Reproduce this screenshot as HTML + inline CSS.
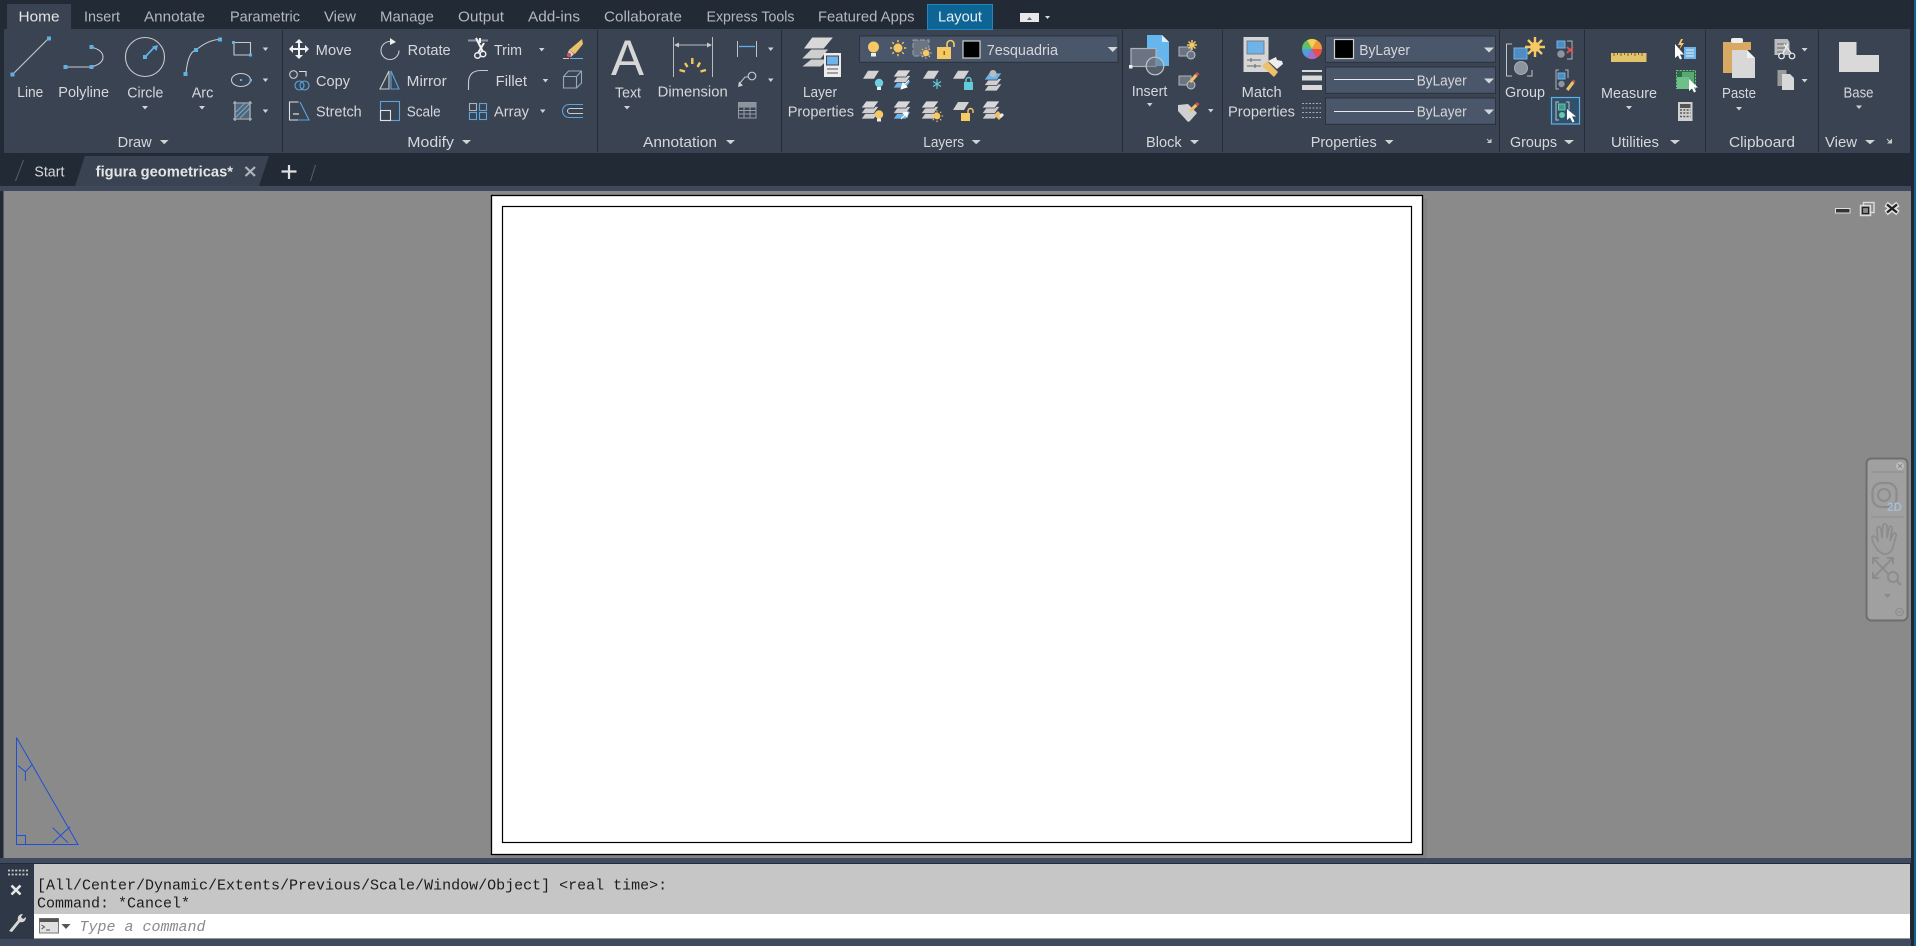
<!DOCTYPE html>
<html><head><meta charset="utf-8"><title>figura geometricas</title>
<style>
html,body{margin:0;padding:0;background:#222a36;overflow:hidden}
svg{display:block}
text{font-family:"Liberation Sans",sans-serif;font-size:14.5px;fill:#d6d8da}
.tab{fill:#b4b8be}
.m{font-family:"Liberation Mono",monospace;font-size:15px;fill:#1c1c1c}
</style></head><body>
<svg width="1916" height="946" viewBox="0 0 1916 946" xmlns="http://www.w3.org/2000/svg">
<defs>
<g id="para"><path d="M5 0h11l-5 8H0z" fill="#d2d2d2"/></g>
<g id="stk" stroke="#3a4352" stroke-width=".8"><path d="M5 11h13l-5 7H0z" fill="#cfcfcf"/><path d="M5 5.500h13l-5 7H0z" fill="#cfcfcf"/><path d="M5 0h13l-5 7H0z" fill="#d8d8d8"/></g>
<g id="stkb" stroke="#3a4352" stroke-width=".8"><path d="M5 11h13l-5 7H0z" fill="#6fb4e8"/><path d="M5 5.500h13l-5 7H0z" fill="#cfcfcf"/><path d="M5 0h13l-5 7H0z" fill="#d8d8d8"/></g>
<g id="stkm" stroke="#3a4352" stroke-width=".8"><path d="M5 11h13l-5 7H0z" fill="#cfcfcf"/><path d="M5 5.500h13l-5 7H0z" fill="#cfcfcf"/><path d="M5 0h13l-5 7H0z" fill="#6fb4e8"/></g>
<g id="sun"><circle r="4.500" fill="#f6c964"/><path d="M0-8v2.200M0 6v2.200M-8 0h2.200M6 0h2.200M-5.700-5.700l1.500 1.500M4.200 4.200l1.500 1.500M-5.700 5.700l1.500-1.500M4.200-4.200l1.500-1.500" stroke="#f6c964" stroke-width="1.400"/></g>
</defs>

<rect width="1916" height="946" fill="#222a36"/>
<!-- ribbon -->
<rect x="4" y="29" width="1906" height="124" fill="#3a4352"/>
<rect x="7" y="4" width="64" height="25" fill="#3a4352"/>
<rect x="927.500" y="4.500" width="65" height="25" fill="#0c6594" stroke="#2787bd"/>
<path d="M282.500 30v122M597.500 30v122M781.500 30v122M1122.500 30v122M1222.500 30v122M1499.500 30v122M1584.500 30v122M1705.500 30v122M1818.500 30v122" stroke="#252c38"/>

<!-- tabs text -->
<text x="18.500" y="21.500" textLength="41" lengthAdjust="spacingAndGlyphs" style="fill:#e6e6e6">Home</text>
<text class="tab" x="84" y="21.500" textLength="36" lengthAdjust="spacingAndGlyphs">Insert</text>
<text class="tab" x="144" y="21.500" textLength="61" lengthAdjust="spacingAndGlyphs">Annotate</text>
<text class="tab" x="230" y="21.500" textLength="70" lengthAdjust="spacingAndGlyphs">Parametric</text>
<text class="tab" x="324" y="21.500" textLength="32" lengthAdjust="spacingAndGlyphs">View</text>
<text class="tab" x="380" y="21.500" textLength="54" lengthAdjust="spacingAndGlyphs">Manage</text>
<text class="tab" x="458" y="21.500" textLength="46" lengthAdjust="spacingAndGlyphs">Output</text>
<text class="tab" x="528" y="21.500" textLength="52" lengthAdjust="spacingAndGlyphs">Add-ins</text>
<text class="tab" x="604" y="21.500" textLength="78" lengthAdjust="spacingAndGlyphs">Collaborate</text>
<text class="tab" x="706.500" y="21.500" textLength="88" lengthAdjust="spacingAndGlyphs">Express Tools</text>
<text class="tab" x="818" y="21.500" textLength="96.500" lengthAdjust="spacingAndGlyphs">Featured Apps</text>
<text x="938" y="21.500" textLength="44" lengthAdjust="spacingAndGlyphs" style="fill:#e8eef2">Layout</text>
<rect x="1020" y="13" width="19" height="9" fill="#e8e8e8"/><path d="M1027 20h5l-2.500-3z" fill="#666"/><path d="M1045 16h5l-2.500 3z" fill="#ddd"/>

<!-- DRAW -->
<g fill="none" stroke="#c8cacc" stroke-width="1.100">
<path d="M13 74L48 39"/>
<path d="M66 67H90M91 47Q103 50 103 57T91 67"/>
<circle cx="145" cy="57" r="19.500"/>
<path d="M186 73Q188 52 196 50Q208 40 219 39.500"/>
<path d="M234 42.500h16.500v12.500h-16.500z"/>
<ellipse cx="241" cy="80" rx="9.500" ry="6.500"/>
<path d="M233 103h19M233 119h19M235 101v20M250 101v20"/>
</g>
<g fill="#5fb0e6">
<rect x="10.500" y="72.500" width="4" height="4"/><rect x="47" y="36.500" width="4" height="4"/>
<rect x="63.500" y="65" width="4" height="4"/><rect x="89.500" y="65" width="4" height="4"/><rect x="89.500" y="45" width="4" height="4"/>
<rect x="143" y="55" width="4" height="4"/>
<rect x="183.500" y="72" width="4" height="4"/><rect x="194" y="48" width="4" height="4"/><rect x="218" y="37.500" width="4" height="4"/>
<rect x="232" y="41" width="3" height="3"/><rect x="249" y="53.500" width="3" height="3"/>
<rect x="240" y="79" width="2" height="2"/><rect x="249.500" y="79" width="2.500" height="2.500"/>
</g>
<path d="M146 56L155 46.500" stroke="#5fb0e6" stroke-width="1.800"/><path d="M158 45l-6 1.500 4.500 4.500z" fill="#5fb0e6"/>
<path d="M236 117l13-13M236 112l9-9M240 118l10-10" stroke="#7fa8c8" stroke-width="1"/><rect x="235" y="104" width="15" height="14" fill="#7fa8c8" opacity=".35"/>

<text x="17.300" y="97" textLength="26" lengthAdjust="spacingAndGlyphs">Line</text>
<text x="58.300" y="97" textLength="50.700" lengthAdjust="spacingAndGlyphs">Polyline</text>
<text x="127.300" y="97.500" textLength="36" lengthAdjust="spacingAndGlyphs">Circle</text>
<text x="191.700" y="97.500" textLength="21.600" lengthAdjust="spacingAndGlyphs">Arc</text>
<text x="117.700" y="147" textLength="34" lengthAdjust="spacingAndGlyphs">Draw</text>
<text x="407.300" y="147" textLength="46.700" lengthAdjust="spacingAndGlyphs">Modify</text>
<text x="643" y="147" textLength="74" lengthAdjust="spacingAndGlyphs">Annotation</text>
<text x="923.300" y="147" textLength="40.700" lengthAdjust="spacingAndGlyphs">Layers</text>
<text x="1146" y="147" textLength="35.700" lengthAdjust="spacingAndGlyphs">Block</text>
<text x="1310.700" y="147" textLength="66" lengthAdjust="spacingAndGlyphs">Properties</text>
<text x="1510" y="147" textLength="47" lengthAdjust="spacingAndGlyphs">Groups</text>
<text x="1611" y="147" textLength="48" lengthAdjust="spacingAndGlyphs">Utilities</text>
<text x="1729" y="147" textLength="66" lengthAdjust="spacingAndGlyphs">Clipboard</text>
<text x="1825" y="147" textLength="32" lengthAdjust="spacingAndGlyphs">View</text>

<!-- carets -->
<path fill="#d0d2d4" d="M160 140h8.500l-4.250 4.300zM462 140h9l-4.500 4.300zM726 140h9l-4.500 4.300zM971.700 140h9l-4.500 4.300zM1190 140h9l-4.500 4.300zM1385 140h8.500l-4.250 4.300zM1564 140h10l-5 4.300zM1670 140h10l-5 4.300zM1865 140h10l-5 4.300z"/>
<path fill="#d0d2d4" d="M142 106h6l-3 3.500zM199 106h6l-3 3.500zM262.700 47.500h5.500l-2.750 3.500zM262.700 78.500h5.500l-2.750 3.500zM262.700 109.500h5.500l-2.750 3.500zM539 48h5.500l-2.750 3.500zM542.700 79h5.500l-2.750 3.500zM540 109.500h5.500l-2.750 3.500zM624 106h6l-3 3.500zM768 47.500h5.500l-2.750 3.500zM768 78.500h5.500l-2.750 3.500zM1147 103h5.500l-2.750 3.500zM1208 109h5.500l-2.750 3.500zM1626 106h6l-3 3.500zM1736 107h6l-3 3.500zM1801.600 48h6l-3 3.500zM1801.600 79h6l-3 3.500zM1856 105.500h6l-3 3.500z"/>
<path d="M1491.500 138.500v4.500h-4.500zM1892 138.500v5h-5z" fill="#c8c8c8"/>
<path d="M1487 139l3.500 3.500M1887 139l3.500 3.500" stroke="#c8c8c8"/>

<!-- MODIFY -->
<path d="M299 39l4 4h-3v5h5v-3l4 4-4 4v-3h-5v5h3l-4 4-4-4h3v-5h-5v3l-4-4 4-4v3h5v-5h-3z" fill="#f0f0f0"/>
<path d="M390 41.500A9 9 0 1 0 399 50.500" fill="none" stroke="#c8cacc" stroke-width="1.100"/><path d="M390 38l6 4-6 3z" fill="#eee"/>
<path d="M468 40.500h20" stroke="#8d97a4" stroke-width="2"/>
<path d="M476 38l7 14M480 38v5M484 43l-6 10" stroke="#f4f4f4" stroke-width="2" fill="none"/>
<circle cx="477.500" cy="55.500" r="2.800" fill="none" stroke="#eee" stroke-width="1.500"/><circle cx="483" cy="54" r="2.800" fill="none" stroke="#eee" stroke-width="1.500"/>
<path d="M582 39l1 5-8 10-6-4z" fill="#edc06a"/><path d="M569 50l5 4-3 3-4-2z" fill="#d9d9d9"/><circle cx="569" cy="55" r="2.200" fill="#d8504c"/>
<path d="M563 58.500h6" stroke="#ccc"/><path d="M570 58.500h13" stroke="#5fb0e6"/>
<g fill="none" stroke-width="1.100">
<circle cx="293.500" cy="74.500" r="3.800" stroke="#c8cacc"/><path d="M299 71.500h7v5" stroke="#e0e0e0"/>
<circle cx="299.500" cy="85.500" r="4.500" stroke="#5aa5dc"/><circle cx="304.500" cy="85.500" r="4.500" stroke="#5aa5dc"/>
<path d="M389 71L380 89H389z" stroke="#c8cacc"/><path d="M391 71L399 89H391z" stroke="#5aa5dc"/>
<path d="M298.500 102H289.500V120H298.500" stroke="#e0e0e0"/><path d="M300 102L309 120H298" stroke="#5aa5dc"/><path d="M293 114h6" stroke="#eee"/>
<rect x="380.500" y="101.500" width="19" height="19" stroke="#5aa5dc"/><rect x="380.500" y="110.500" width="10" height="10" stroke="#e0e0e0"/>
<path d="M468.500 90V83Q468.500 70.500 481 70.500H488" stroke="#c8cacc"/>
<rect x="469.500" y="103.500" width="7" height="7" stroke="#a8b4c0"/><rect x="479.500" y="103.500" width="7" height="7" stroke="#5aa5dc"/><rect x="469.500" y="112.500" width="7" height="7" stroke="#5aa5dc"/><rect x="479.500" y="112.500" width="7" height="7" stroke="#5aa5dc"/>
<path d="M563.500 76.500h13v11.500h-13zM563.500 76.500l5-5.500h13v12l-5 5M576.500 76.500l5-5.500" stroke="#93a9bd"/>
<path d="M583 104.500h-14a6.500 6.500 0 0 0 0 13h14" stroke="#5aa5dc"/><path d="M583 108.500h-13a2.500 2.500 0 0 0 0 5h13" stroke="#c8cacc"/>
</g>
<text x="315.700" y="55" textLength="36" lengthAdjust="spacingAndGlyphs">Move</text>
<text x="407.700" y="55" textLength="43" lengthAdjust="spacingAndGlyphs">Rotate</text>
<text x="494" y="55" textLength="28" lengthAdjust="spacingAndGlyphs">Trim</text>
<text x="316" y="86" textLength="34" lengthAdjust="spacingAndGlyphs">Copy</text>
<text x="406.700" y="86" textLength="40" lengthAdjust="spacingAndGlyphs">Mirror</text>
<text x="495.700" y="86" textLength="31.300" lengthAdjust="spacingAndGlyphs">Fillet</text>
<text x="316" y="116.700" textLength="45.700" lengthAdjust="spacingAndGlyphs">Stretch</text>
<text x="406.700" y="116.700" textLength="34" lengthAdjust="spacingAndGlyphs">Scale</text>
<text x="494" y="116.700" textLength="35" lengthAdjust="spacingAndGlyphs">Array</text>

<!-- ANNOTATION -->
<text x="611" y="75" style="font-size:50px;fill:#d6d6d6" textLength="33" lengthAdjust="spacingAndGlyphs">A</text>
<text x="615" y="97.500" textLength="26" lengthAdjust="spacingAndGlyphs">Text</text>
<text x="657.700" y="96.700" textLength="70" lengthAdjust="spacingAndGlyphs">Dimension</text>
<path d="M673.500 37v40M712.500 37v40M675 45h36" stroke="#b8bcc0" fill="none"/><path d="M674 45l5-2.500v5zM712 45l-5-2.500v5z" fill="#c8c8c8"/>
<path d="M692.300 58v6M685 63l2.500 4M700 62.500l-2.500 4.500M679.500 70l5.500 1.500M706 70l-5.500 1.500" stroke="#f2c661" stroke-width="2.400" fill="none"/>
<path d="M737.500 41v16M756.500 41v16" stroke="#c0c4c8"/><path d="M739 46.500h16" stroke="#5fb0e6" stroke-width="1.300"/>
<circle cx="752" cy="76" r="3.800" fill="none" stroke="#c0c4c8" stroke-width="1.200"/><path d="M748 77h-3l-5 6" fill="none" stroke="#c0c4c8"/><path d="M738 87l1-5.500 4 4z" fill="#d0d0d0"/>
<path d="M738.500 102.500h17.500v15.500h-17.500zM738.500 107h17.500M738.500 110.500h17.500M738.500 114h17.500M744 107v11M750 107v11" fill="none" stroke="#949ca6"/><path d="M738.500 102.500h17.500v4.500h-17.500z" fill="#8b939d"/>

<!-- LAYERS -->
<g stroke="#3a4352" stroke-width="1"><path d="M811 59h18l-8 8h-20z" fill="#cfcfcf"/><path d="M811 49h18l-8 10h-20z" fill="#cfcfcf"/><path d="M812 37h22l-10 12h-21z" fill="#d8d8d8"/></g>
<rect x="824" y="53" width="17" height="24" fill="#ececec"/><rect x="826.500" y="56" width="12" height="9" fill="#6fb4e8" stroke="#445"/><path d="M827 69h11M827 73h11" stroke="#555"/>
<text x="803" y="97" textLength="34" lengthAdjust="spacingAndGlyphs">Layer</text>
<text x="787.700" y="116.700" textLength="66.300" lengthAdjust="spacingAndGlyphs">Properties</text>

<rect x="859.500" y="36" width="258.500" height="26.300" fill="#4a566a" stroke="#2a3240"/>
<circle cx="873.500" cy="47" r="5.500" fill="#f6c964"/><path d="M871 53h5v3.500h-5z" fill="#eee"/>
<use href="#sun" x="898" y="48"/>
<path d="M913 40h16v16h-16z" fill="#6b7482" stroke="#9aa2ac" stroke-dasharray="5 2"/><use href="#sun" transform="translate(926 53) scale(.7)"/>
<rect x="937" y="47" width="14" height="12" fill="#f6c964"/><path d="M947 47v-3a3.500 3.500 0 0 1 7 0v3" fill="none" stroke="#f6c964" stroke-width="1.600"/><rect x="943.500" y="51" width="1.500" height="4" fill="#8a6a20"/>
<rect x="963" y="41" width="17" height="17" fill="#000" stroke="#d0d0d0" stroke-width="1.200"/>
<text x="986.700" y="55" textLength="71.300" lengthAdjust="spacingAndGlyphs">7esquadria</text>

<!-- row2 -->
<use href="#para" x="863" y="70.700"/><circle cx="879" cy="83" r="4.200" fill="#6fd0dc"/><rect x="877" y="87" width="4" height="3" fill="#eee"/>
<use href="#stkb" x="893" y="70"/><path d="M901 89l2-6 4 4zM904 85l5-5" fill="#fff" stroke="#fff"/>
<use href="#para" x="923" y="70.700"/><path d="M937 79v10M933 81.500l8 5M941 81.500l-8 5" stroke="#63cad8" stroke-width="1.200"/>
<use href="#para" x="953" y="70.700"/><rect x="964" y="82" width="9" height="8" fill="#63cad8"/><path d="M966 82v-2a2.500 2.500 0 0 1 5 0v2" fill="none" stroke="#63cad8" stroke-width="1.400"/>
<use href="#stkm" x="984" y="73"/><circle cx="993" cy="73.500" r="3.500" fill="#b8bcc0"/>
<!-- row3 -->
<use href="#stk" x="861" y="101"/><circle cx="879" cy="114.500" r="4.200" fill="#f6c964"/><rect x="877" y="118.500" width="4" height="3" fill="#eee"/>
<use href="#stkb" x="893" y="101"/><path d="M901 119l5-5M908 112l-5 1 4 4z" fill="#fff" stroke="#fff"/>
<use href="#stk" x="921" y="101"/><use href="#sun" transform="translate(937 116) scale(.75)"/>
<use href="#para" x="953" y="102"/><rect x="961" y="113" width="9" height="8" fill="#f6c964"/><path d="M968 113v-2a2.500 2.500 0 0 1 5 0v2" fill="none" stroke="#f6c964" stroke-width="1.400"/>
<use href="#stk" x="982" y="101"/><path d="M994 115l4-4 5 5-4 4z" fill="#edc06a"/><path d="M999 116l3-3 2 2-3 3z" fill="#eee"/>

<!-- BLOCK -->
<path d="M1147 35h15l7 7v24h-22z" fill="#66b6ee"/><path d="M1162 35l7 7h-7z" fill="#d8eefa"/>
<rect x="1131" y="48.500" width="25" height="18" fill="#6a7482" stroke="#b0b4ba" stroke-width="1.200"/>
<circle cx="1155" cy="66" r="8.800" fill="#6a7482" fill-opacity=".55" stroke="#c0c4c8" stroke-width="1.200"/><rect x="1129" y="65" width="3.500" height="3.500" fill="#eee"/>
<text x="1131.700" y="96" textLength="35.600" lengthAdjust="spacingAndGlyphs">Insert</text>
<rect x="1179" y="47" width="12" height="9" fill="#6a7482" stroke="#b0b4ba"/><circle cx="1191" cy="55" r="4" fill="#6a7482" stroke="#c0c4c8"/><path d="M1192 40v10M1187 45h10M1188.500 41.500l7 7M1195.500 41.500l-7 7" stroke="#f6c964" stroke-width="1.500"/>
<rect x="1179" y="76" width="12" height="9" fill="#6a7482" stroke="#b0b4ba"/><circle cx="1191" cy="85" r="4" fill="#6a7482" stroke="#c0c4c8"/><path d="M1189 81l6-7 2.500 2-6 7z" fill="#edc06a"/><path d="M1195 74l2-2 2.500 2-2 2z" fill="#d8504c"/>
<path d="M1178 105l10-1 9 9-7 8-2 1-10-11z" fill="#d0d0d0"/><path d="M1189 110l6-6 2.500 2-6 6z" fill="#edc06a"/><path d="M1195 104l2-2 2.500 2-2 2z" fill="#d8504c"/>

<!-- PROPERTIES -->
<rect x="1243.500" y="37" width="25" height="35" fill="#d6d6d6"/><rect x="1247" y="41" width="17" height="13" fill="#6fb4e8" stroke="#7a8088"/><path d="M1247 60h14M1247 66h14M1251 58v4M1255 64v4" stroke="#666"/>
<path d="M1262 66l5-5 11 11-4 5z" fill="#edc06a"/><path d="M1268 61l8-4 1 3 5 1 1 3-6 5z" fill="#eee"/>
<text x="1241.700" y="97" textLength="40" lengthAdjust="spacingAndGlyphs">Match</text>
<text x="1228" y="116.700" textLength="67" lengthAdjust="spacingAndGlyphs">Properties</text>
<path d="M1312 49L1322 49A10 10 0 0 1 1317 57.700z" fill="#e6524b"/><path d="M1312 49L1317 57.700A10 10 0 0 1 1307 57.700z" fill="#a86cc6"/><path d="M1312 49L1307 57.700A10 10 0 0 1 1302 49z" fill="#4f9fe0"/><path d="M1312 49L1302 49A10 10 0 0 1 1307 40.300z" fill="#5fbf6a"/><path d="M1312 49L1307 40.300A10 10 0 0 1 1317 40.300z" fill="#f3d14e"/><path d="M1312 49L1317 40.300A10 10 0 0 1 1322 49z" fill="#f19a3d"/>
<path d="M1302 70h20v2h-20zM1302 75.500h20v5h-20zM1302 85h20v5h-20z" fill="#d8d8d8"/>
<path d="M1302 103.500h19M1302 108h19M1302 112.500h19M1302 117.500h19" stroke="#a8acb0" stroke-dasharray="2 1.500"/>
<g fill="#4a566a" stroke="#2a3240"><rect x="1325.500" y="36" width="170" height="26.300"/><rect x="1325.500" y="67" width="170" height="26.300"/><rect x="1325.500" y="98" width="170" height="26.300"/></g>
<rect x="1334.500" y="39.500" width="19" height="19" fill="#000" stroke="#d0d0d0" stroke-width="1.200"/>
<text x="1359.300" y="55" textLength="50.700" lengthAdjust="spacingAndGlyphs">ByLayer</text>
<path d="M1334 79.500h80M1334 111.500h80" stroke="#eaeaea"/>
<text x="1416.700" y="85.700" textLength="50" lengthAdjust="spacingAndGlyphs">ByLayer</text>
<text x="1416.700" y="116.700" textLength="50" lengthAdjust="spacingAndGlyphs">ByLayer</text>
<!-- combo carets -->
<path fill="#d4d6d8" d="M1107.700 47h10l-5 5zM1484 47.500h10l-5 5zM1484 78.500h10l-5 5zM1484 109.500h10l-5 5z"/>

<!-- GROUPS -->
<path d="M1512 44h-5.500v32h5.500M1527 76h5v-6" fill="none" stroke="#c0c4c8"/>
<rect x="1514" y="48" width="13" height="11" fill="#4f8cc0" stroke="#6fb4e8"/><circle cx="1521" cy="68" r="6.500" fill="#8c949e" stroke="#aab"/>
<path d="M1535 37v20M1525 47h20M1528 40l14 14M1542 40l-14 14" stroke="#f6c964" stroke-width="2.400"/><circle cx="1535" cy="47" r="5" fill="#f6c964"/>
<text x="1505" y="97" textLength="40" lengthAdjust="spacingAndGlyphs">Group</text>
<path d="M1567 41h5v18h-5" fill="none" stroke="#b0b4ba"/><rect x="1557" y="41" width="8" height="7" fill="#4f8cc0" stroke="#6fb4e8"/><circle cx="1561" cy="54" r="3.800" fill="#8c949e"/><path d="M1567 47l6 6M1573 47l-6 6" stroke="#e0544c" stroke-width="1.800"/>
<path d="M1559 70h-3v19h3M1565 70h3v8" fill="none" stroke="#b0b4ba"/><rect x="1558" y="73" width="7" height="6" fill="#4f8cc0" stroke="#6fb4e8"/><circle cx="1561.500" cy="84" r="3.200" fill="#8c949e"/><path d="M1566 89l6-8 2.500 2-6 8z" fill="#edc06a"/><path d="M1572 81l1.500-1.500 2 2-1.500 1.500z" fill="#d8504c"/>
<rect x="1551.500" y="97.500" width="28" height="26.500" fill="#30506c" stroke="#5fb0e6" stroke-width="1.200"/>
<path d="M1559 102h-3v18h3M1566 102h3v8" fill="none" stroke="#c0c4c8"/><rect x="1558.500" y="104" width="6.500" height="6" fill="#3f9a88" stroke="#66c8aa"/><circle cx="1562" cy="115" r="3" fill="#66c8aa"/>
<path d="M1567 109v11l3-2.500 2.500 5 2-1-2.500-5h4z" fill="#fff"/>

<!-- UTILITIES -->
<rect x="1611" y="53" width="35.500" height="9" fill="#e2c36c"/><path d="M1614 53v3M1617.500 53v2M1621 53v3M1624.500 53v2M1628 53v3M1631.500 53v2M1635 53v3M1638.500 53v2M1642 53v3" stroke="#7a6330"/>
<text x="1601" y="98" textLength="56" lengthAdjust="spacingAndGlyphs">Measure</text>
<path d="M1675 46v14l3-2.500 2 4 2-1-2-4h4z" fill="#fff" transform="translate(0 -2)"/><rect x="1684" y="47" width="12" height="12" fill="#6fb4e8"/><path d="M1686 50h8M1686 53h8M1686 56h8" stroke="#eee"/><path d="M1681 39l-3 6h3l-2 5 5-7h-3l2-4z" fill="#f6c964"/>
<rect x="1676.500" y="70.500" width="19" height="18" fill="#2f6b48" stroke="#6ec089" stroke-dasharray="2 1.200"/><rect x="1677" y="77" width="12" height="12" fill="#6ec089"/><rect x="1682" y="72" width="12" height="11" fill="#6ec089" opacity=".7"/><path d="M1689 79v12l3-2.500 2 4 2-1-2-4h4z" fill="#fff"/>
<rect x="1678" y="102" width="14.500" height="19" fill="#d0d0d0"/><rect x="1680" y="104" width="10.500" height="4" fill="#555"/><path d="M1680 110h10.500M1680 113h10.500M1680 116.500h10.500" stroke="#555" stroke-width="1.600" stroke-dasharray="2 1.300"/>

<!-- CLIPBOARD -->
<path d="M1723 42h28v8h-19v23h-9z" fill="#d9a862"/><rect x="1731" y="38" width="12" height="5" rx="2" fill="#eee"/>
<path d="M1732 50h15l8 8v20h-23z" fill="#d8d8d8"/><path d="M1747 50l8 8h-8z" fill="#f2f2f2"/>
<text x="1722" y="98" textLength="34" lengthAdjust="spacingAndGlyphs">Paste</text>
<path d="M1774.500 39h13l2 3v13h-15z" fill="#bcbcbc"/><path d="M1777 44h9M1777 48h9M1777 52h6" stroke="#666"/>
<path d="M1788 44l-5 9M1784 44l7 9" stroke="#eee" stroke-width="1.300"/><circle cx="1781.500" cy="56" r="2.800" fill="#3a4352" stroke="#eee" stroke-width="1.200"/><circle cx="1792" cy="56" r="2.800" fill="#3a4352" stroke="#eee" stroke-width="1.200"/>
<path d="M1777.500 70h9v16h-9z" fill="#9a9a9a"/><path d="M1782 74h8l4 4v12h-12z" fill="#d8d8d8"/>

<!-- VIEW -->
<path d="M1839 42h17.500v13h22.500v17h-40z" fill="#d9d9d9"/>
<text x="1843.500" y="97.700" textLength="30" lengthAdjust="spacingAndGlyphs">Base</text>

<!-- doc tabs -->
<path d="M15.500 181l8-21M310.500 181l5-16" stroke="#566070" fill="none"/>
<text x="34.400" y="176.700" textLength="30" lengthAdjust="spacingAndGlyphs">Start</text>
<path d="M75 186L85 156H269L259 186z" fill="#3a4352"/>
<text x="95.700" y="176.700" textLength="137.300" lengthAdjust="spacingAndGlyphs" style="font-weight:bold;fill:#e4e4e4">figura geometricas*</text>
<path d="M245.500 167l9.500 9M255 167l-9.500 9" stroke="#aeb4bb" stroke-width="2.200"/>
<path d="M281.500 171.500h15M289 165v14" stroke="#e0e0e0" stroke-width="2.200"/>

<rect x="0" y="186" width="1911" height="5" fill="#3e4a5c"/>

<!-- canvas -->
<rect x="3.500" y="191" width="1907.500" height="667" fill="#8a8a8a"/>
<rect x="1423" y="199" width="4" height="658" fill="#838383"/><rect x="495" y="855" width="932" height="3" fill="#838383"/>
<rect x="491.500" y="195.500" width="931" height="659" fill="#fff" stroke="#000" stroke-width="1.300"/>
<rect x="502.500" y="206.500" width="909" height="636" fill="#fff" stroke="#000" stroke-width="1.200"/>

<!-- window buttons -->
<rect x="1835.500" y="208.500" width="14.500" height="4.500" fill="#333" stroke="#ddd" stroke-width="1"/>
<rect x="1863.500" y="202.500" width="10.500" height="10" fill="none" stroke="#ddd" stroke-width="1.400"/><rect x="1860.500" y="205.500" width="10" height="10" fill="#8a8a8a" stroke="#ddd" stroke-width="1.400"/><rect x="1862.500" y="207.500" width="6" height="6" fill="none" stroke="#222" stroke-width="1.200"/>
<path d="M1886 204l12 9M1898 204l-12 9" stroke="#e2e2e2" stroke-width="5.500"/><path d="M1887 204.500l10 8M1897 204.500l-10 8" stroke="#222" stroke-width="2.400"/>

<!-- navbar -->
<rect x="1866.500" y="458.500" width="41" height="162" rx="5" fill="#a0a0a0" stroke="#6e6e6e" stroke-width="2"/>
<circle cx="1900" cy="466" r="4" fill="#bcbcbc"/><path d="M1898 464l4 4M1902 464l-4 4" stroke="#888"/>
<path d="M1871 472h33M1871 517h33" stroke="#8e8e8e"/>
<rect x="1872.500" y="483" width="24" height="24" rx="9" fill="none" stroke="#8c8c8c" stroke-width="2.200"/><circle cx="1884" cy="495" r="6" fill="none" stroke="#8c8c8c" stroke-width="2"/>
<text x="1887" y="511" textLength="15" lengthAdjust="spacingAndGlyphs" style="font-size:12px;font-weight:bold;fill:#a9bbd0">2D</text>
<path d="M1878 550c-3-3-6-9-6-12s3-2 5 1l1 3-1-13c0-3 3-3 4 0l1 9 1-12c0-3 3-3 4 0v12l2-10c0-3 4-2 3 1l-2 12 3-7c1-2 4-1 3 2l-3 11c-1 4-4 7-8 7s-4-2-8-4z" fill="none" stroke="#8c8c8c" stroke-width="1.600"/>
<path d="M1873 558l17 18M1893 558l-20 20M1873 564v-6h6M1893 564v-6h-6M1873 572v6h6" fill="none" stroke="#8c8c8c" stroke-width="2"/><circle cx="1893" cy="577" r="5" fill="#a0a0a0" stroke="#8c8c8c" stroke-width="2"/><path d="M1897 581l4 4" stroke="#8c8c8c" stroke-width="2.400"/>
<path d="M1884 594h7l-3.500 4z" fill="#8a8a8a"/><circle cx="1899.500" cy="612" r="3.800" fill="none" stroke="#8a8a8a"/><path d="M1897.500 612h4" stroke="#8a8a8a"/>

<!-- UCS -->
<g fill="none" stroke="#1e4fd6" stroke-width="1"><path d="M16.500 737.500V844.500H78L16.500 737.500"/><path d="M16.500 835.500H25.500V844.500"/><path d="M18 765.700L25.400 771.700L32.600 764.300M25.400 771.700V781"/><path d="M52.700 827.700L67.900 842.700M70 826.700L52.700 842.700"/></g>

<!-- command line -->
<rect x="0" y="858" width="1911" height="5" fill="#3f4a5e"/>
<rect x="0" y="863" width="1911" height="1" fill="#252c38"/>
<rect x="0" y="864" width="34" height="75" fill="#2f3846"/>
<rect x="34" y="864" width="1876" height="50" fill="#c6c6c6"/>
<rect x="34" y="914" width="1876" height="24" fill="#fff"/>
<rect x="34" y="938" width="1876" height="1" fill="#9a9a9a"/>
<rect x="0" y="939" width="1911" height="7" fill="#3f4a5e"/>
<path d="M8 870.500h21M8 874.500h21" stroke="#c8c8c8" stroke-width="1.800" stroke-dasharray="2 1.600"/>
<path d="M11.500 885.500l9 9M20.500 885.500l-9 9" stroke="#e8e8e8" stroke-width="2.600"/>
<path d="M9 931l9-11c-1-3 1-6 5-6l-2 3 2 2 3-2c0 4-3 6-6 5l-8 10z" fill="#d8d8d8"/>
<text class="m" x="37" y="889.300">[All/Center/Dynamic/Extents/Previous/Scale/Window/Object] &lt;real time&gt;:</text>
<text class="m" x="37" y="907.700">Command: *Cancel*</text>
<rect x="39.500" y="918.500" width="19" height="14.500" fill="#e0e0e0" stroke="#777"/><rect x="39.500" y="918.500" width="19" height="3.500" fill="#555"/><path d="M41.500 925l3 2-3 2M46 930h4" stroke="#555" fill="none"/>
<path d="M61.500 924h9l-4.500 5z" fill="#555"/>
<text class="m" x="79.500" y="931" style="font-style:italic;fill:#8a8a8a">Type a command</text>

<!-- right edge -->
<rect x="1911" y="0" width="3" height="946" fill="#1f2632"/>
<rect x="1914" y="0" width="2" height="946" fill="#14618f"/>
</svg>
</body></html>
